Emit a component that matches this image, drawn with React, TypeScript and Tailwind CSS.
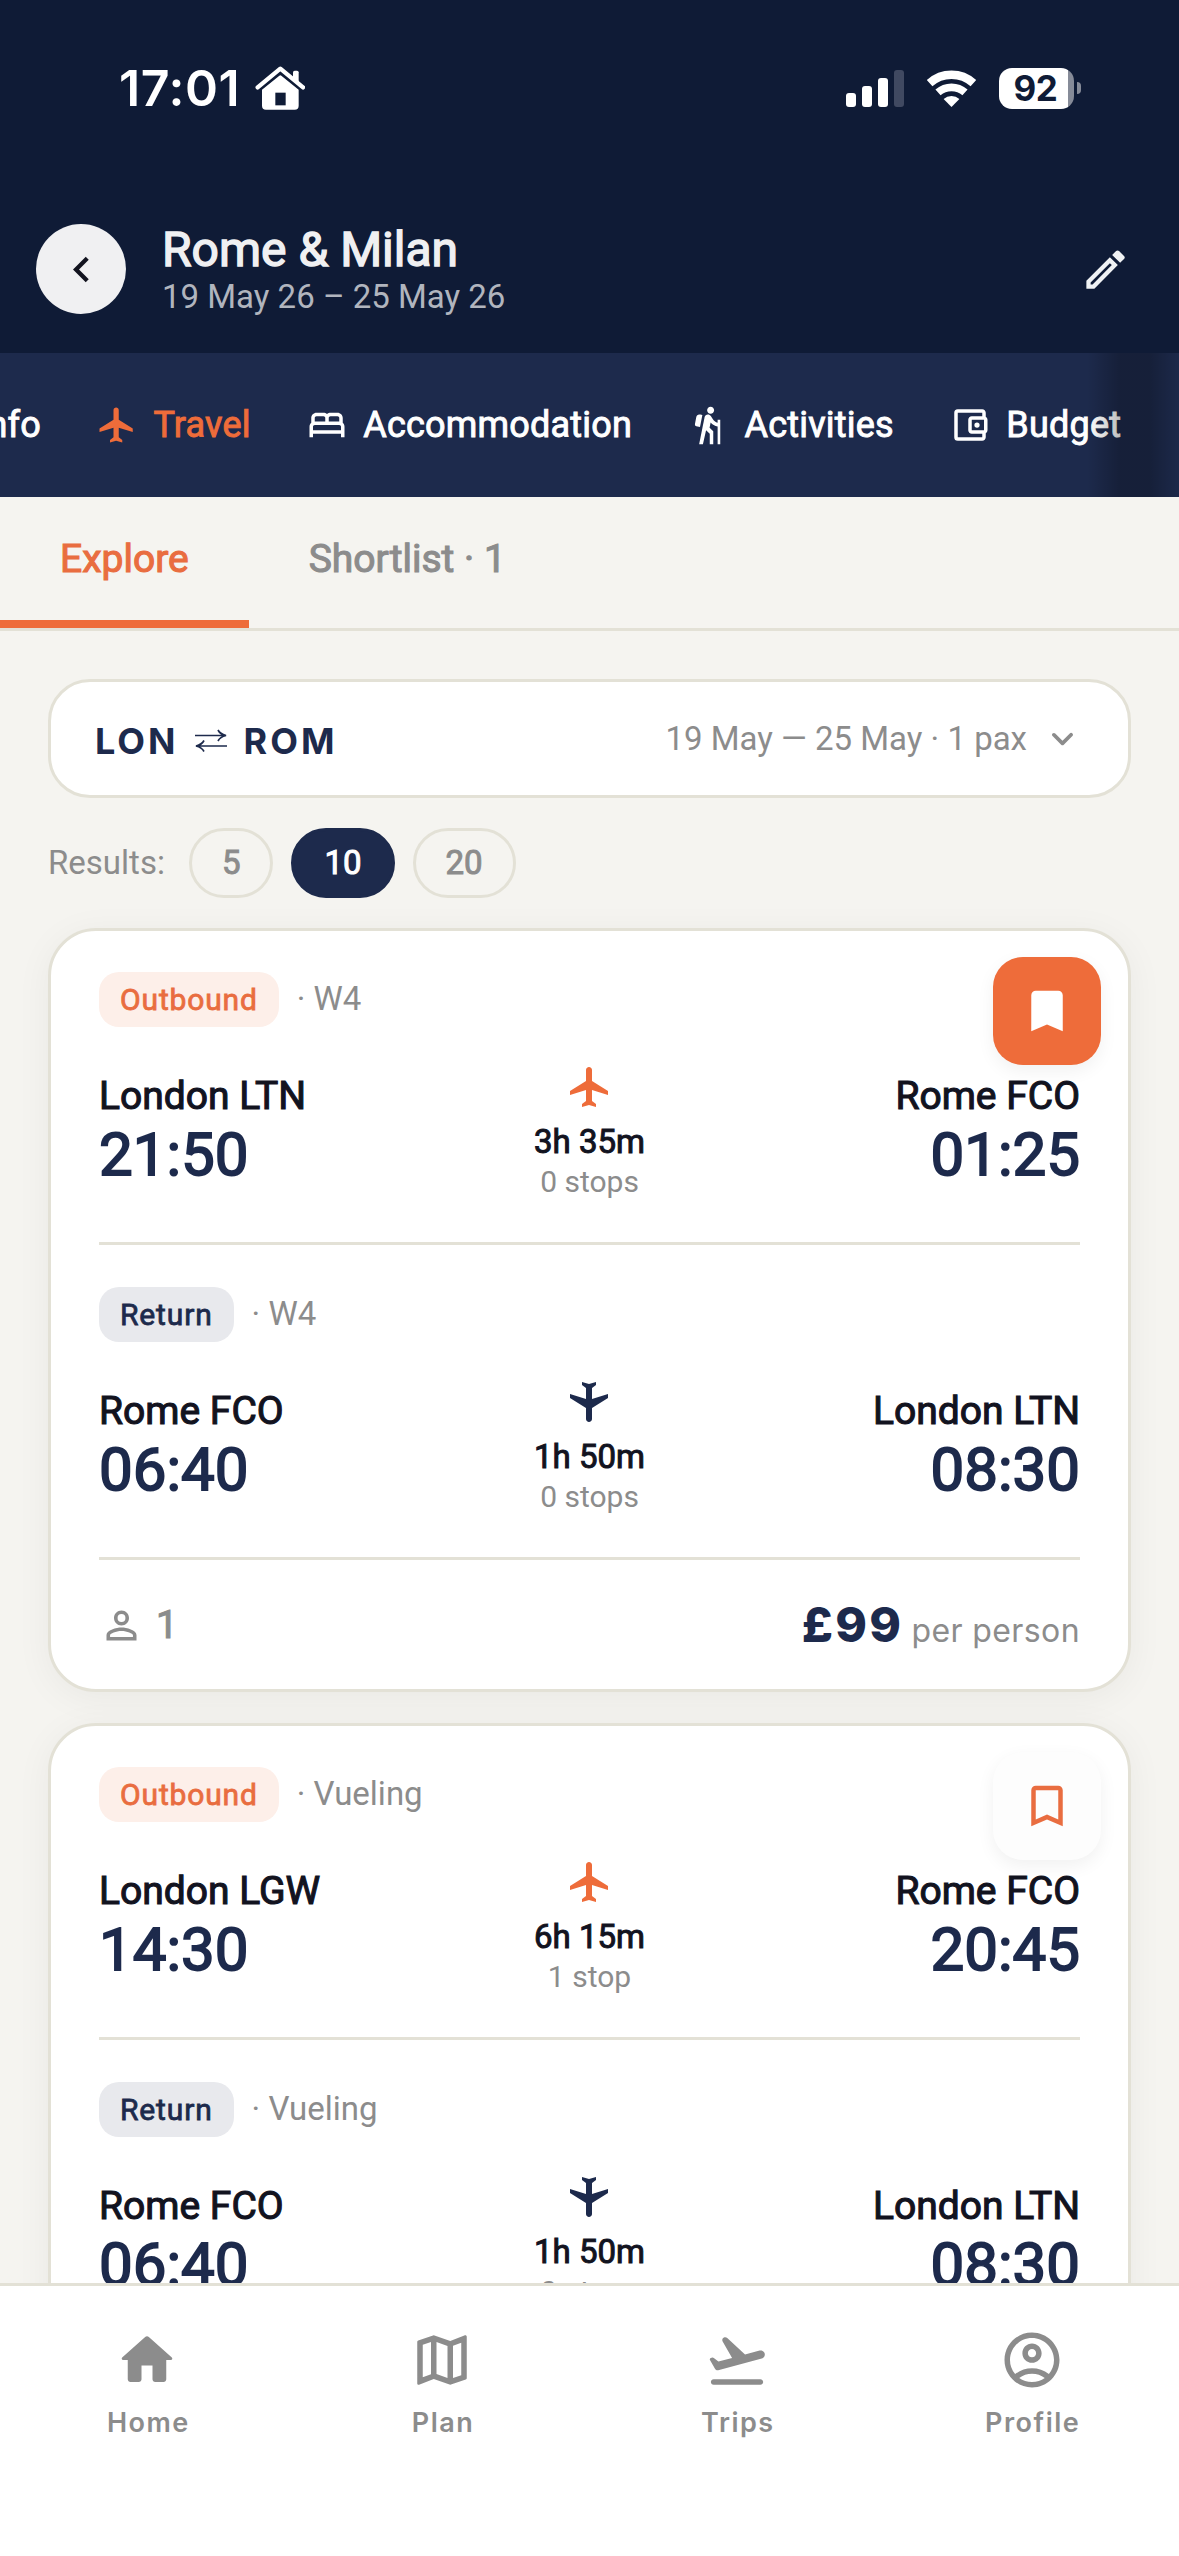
import React, { useState } from 'react';
import clsx from 'clsx';
import {
   MdBookmark,
   MdBookmarkBorder,
   MdChevronLeft,
   MdFlight,
   MdHiking,
   MdOutlineAccountBalanceWallet,
   MdOutlineAccountCircle,
   MdOutlineBed,
   MdOutlineEdit,
   MdOutlineMap,
   MdPersonOutline
} from 'react-icons/md';

interface Leg {
   type: 'Outbound' | 'Return';
   carrier: string;
   from: string;
   departs: string;
   to: string;
   arrives: string;
   duration: string;
   stops: string;
}

interface Flight {
   id: string;
   saved: boolean;
   pax: number;
   price: string;
   legs: Leg[];
}

const flights: Flight[] = [
   {
      id: 'w4-99',
      saved: true,
      pax: 1,
      price: '£99',
      legs: [
         { type: 'Outbound', carrier: 'W4', from: 'London LTN', departs: '21:50', to: 'Rome FCO', arrives: '01:25', duration: '3h 35m', stops: '0 stops' },
         { type: 'Return', carrier: 'W4', from: 'Rome FCO', departs: '06:40', to: 'London LTN', arrives: '08:30', duration: '1h 50m', stops: '0 stops' },
      ],
   },
   {
      id: 'vueling-104',
      saved: false,
      pax: 1,
      price: '£104',
      legs: [
         { type: 'Outbound', carrier: 'Vueling', from: 'London LGW', departs: '14:30', to: 'Rome FCO', arrives: '20:45', duration: '6h 15m', stops: '1 stop' },
         { type: 'Return', carrier: 'Vueling', from: 'Rome FCO', departs: '06:40', to: 'London LTN', arrives: '08:30', duration: '1h 50m', stops: '0 stops' },
      ],
   },
];

const sections = [
   { label: 'Travel', icon: MdFlight },
   { label: 'Accommodation', icon: MdOutlineBed },
   { label: 'Activities', icon: MdHiking },
   { label: 'Budget', icon: MdOutlineAccountBalanceWallet },
];

const HomeRounded = ({ className }: { className?: string }) => (
   <svg viewBox="0 0 24 24" fill="currentColor" className={className}>
      <path d="M10 19v-5h4v5c0 .55.45 1 1 1h3c.55 0 1-.45 1-1v-7h1.7c.46 0 .68-.57.33-.87L12.67 3.6c-.38-.34-.96-.34-1.34 0l-8.36 7.53c-.34.3-.13.87.33.87H5v7c0 .55.45 1 1 1h3c.55 0 1-.45 1-1z" />
   </svg>
);

const TakeoffRounded = ({ className }: { className?: string }) => (
   <svg viewBox="0 0 24 24" fill="currentColor" className={className}>
      <path d="M20.5 21h-17c-.55 0-1-.45-1-1s.45-1 1-1h17c.55 0 1 .45 1 1s-.45 1-1 1zm1.57-11.36c-.22-.8-1.04-1.27-1.84-1.06L14.92 10 8.46 3.98c-.27-.26-.66-.35-1.02-.26-.68.18-1.01.95-.66 1.55l3.44 5.98-4.97 1.33-1.57-1.24c-.25-.19-.57-.26-.88-.18l-.33.09c-.32.08-.47.45-.3.73l1.88 3.25c.23.39.69.58 1.12.47L21 11.48c.8-.22 1.28-1.04 1.07-1.84z" />
   </svg>
);

const navItems = [
   { label: 'Home', icon: HomeRounded },
   { label: 'Plan', icon: MdOutlineMap },
   { label: 'Trips', icon: TakeoffRounded },
   { label: 'Profile', icon: MdOutlineAccountCircle },
];

const StatusBar = () => (
   <div className="flex h-[176px] items-center justify-between pr-[98px] pl-[119px] font-['Inter',sans-serif] text-white">
      <div className="flex items-center gap-[15px]">
         <span className="text-[50px] leading-[60px] font-semibold tracking-[0.6px]">17:01</span>
         <svg width="50" height="44" viewBox="76 46 150 132">
            <path d="M195 60h7q5 0 5 5v36l-17-14v-22q0-5 5-5z" fill="white" />
            <path d="M84 110L152 54L220 110" fill="none" stroke="white" strokeWidth="13" strokeLinecap="round" strokeLinejoin="round" />
            <path d="M149 75q3-3 6 0L207 117v48q0 12-12 12h-86q-12 0-12-12v-48z" fill="white" />
            <rect x="137" y="126" width="31" height="38" fill="#0f1b36" />
         </svg>
      </div>
      <div className="flex items-center">
         <svg width="58" height="37" viewBox="0 0 58 37" fill="white">
            <rect x="0" y="23" width="10" height="14" rx="3" />
            <rect x="16" y="16" width="10" height="21" rx="3" />
            <rect x="32" y="8" width="10" height="29" rx="3" />
            <rect x="48" y="0" width="10" height="37" rx="3" fill="#404961" />
         </svg>
         <svg width="51" height="37" viewBox="0 0 51 37" className="ml-[22px]" fill="none" stroke="white">
            <path d="M3.6 13.2A32.7 32.7 0 0 1 47.4 13.2" strokeWidth="8.4" />
            <path d="M12 22.4A20.5 20.5 0 0 1 39 22.4" strokeWidth="7.8" />
            <path d="M25.5 37L17.6 29A12 12 0 0 1 33.4 29z" fill="white" stroke="none" />
         </svg>
         <div className="ml-[22px] flex h-[41px] w-[75px] items-center rounded-[13px] bg-[linear-gradient(90deg,#ffffff_69px,#868b98_69px)]">
            <span className="w-[73px] text-center text-[35px] leading-[41px] font-bold tracking-[-0.3px] text-[#0f1b36]">92</span>
         </div>
         <div className="ml-[3px] h-[12px] w-[4px] rounded-r-full bg-[#868b98]" />
      </div>
   </div>
);

const LegRow = ({ leg }: { leg: Leg }) => {
   const outbound = leg.type === 'Outbound';
   return (
      <div>
         <div className="flex h-[55px] items-center gap-[18px]">
            <span
               className={clsx(
                  'flex h-full items-center rounded-[20px] px-[21px] pb-[1px] text-[30px] tracking-[0.85px] [-webkit-text-stroke:0.8px]',
                  outbound ? 'bg-[#fdefe9] text-[#e96d40]' : 'bg-[#e8e9ed] text-[#1d2a4c]'
               )}
            >
               {leg.type}
            </span>
            <span className="pb-[2px] text-[33px] text-[#8c8c8c]">· {leg.carrier}</span>
         </div>
         <div className="mt-[36px] grid h-[137px] grid-cols-3 items-start">
            <div className="pt-[8px]">
               <p className="text-[39px] leading-[51px] text-[#12131f] [-webkit-text-stroke:1.1px]">{leg.from}</p>
               <p className="text-[60px] leading-[65px] text-[#1d2a4c] [-webkit-text-stroke:1.8px]">{leg.departs}</p>
            </div>
            <div className="flex flex-col items-center">
               <MdFlight className={clsx('size-[48px]', outbound ? 'text-[#ee6c3a]' : '-scale-y-100 text-[#1d2a4c]')} />
               <p className="mt-[11px] text-[33px] leading-[40px] text-[#12131f] [-webkit-text-stroke:1px]">{leg.duration}</p>
               <p className="text-[30px] leading-[40px] text-[#8c8c8c]">{leg.stops}</p>
            </div>
            <div className="pt-[8px] text-right">
               <p className="text-[39px] leading-[51px] text-[#12131f] [-webkit-text-stroke:1.1px]">{leg.to}</p>
               <p className="text-[60px] leading-[65px] text-[#1d2a4c] [-webkit-text-stroke:1.8px]">{leg.arrives}</p>
            </div>
         </div>
      </div>
   );
};

const FlightCard = ({ flight, saved, onToggle }: { flight: Flight; saved: boolean; onToggle: () => void }) => (
   <article className="relative shrink-0 rounded-[48px] border-[3px] border-[#e3e1d6] bg-white px-12 pt-[41px] shadow-[0_6px_36px_rgba(0,0,0,0.05)]">
      <button
         onClick={onToggle}
         className={clsx(
            'absolute top-[26px] right-[27px] flex size-[108px] items-center justify-center rounded-[30px] shadow-[0_6px_18px_rgba(0,0,0,0.06)]',
            saved ? 'bg-[#ee6c3a] text-white' : 'bg-[#fdfdfd] text-[#e96d40]'
         )}
      >
         {saved ? <MdBookmark className="size-[54px]" /> : <MdBookmarkBorder className="size-[54px]" />}
      </button>
      {flight.legs.map((leg, i) => (
         <div key={leg.type} className={clsx('border-b-[3px] border-[#e3e1d6] pb-[42px]', i > 0 && 'pt-[42px]')}>
            <LegRow leg={leg} />
         </div>
      ))}
      <div className="flex h-[129px] items-center justify-between pt-[2px]">
         <div className="flex items-center gap-[12px] text-[#8c8c8c]">
            <MdPersonOutline className="size-[45px]" />
            <span className="text-[39px] [-webkit-text-stroke:1.1px]">{flight.pax}</span>
         </div>
         <div className="flex items-baseline gap-[8px] font-['Inter',sans-serif]">
            <span className="text-[48px] leading-[58px] font-extrabold tracking-[2.3px] text-[#1d2a4c]">{flight.price}</span>
            <span className="text-[32px] tracking-[0.4px] text-[#8c8c8c]">per person</span>
         </div>
      </div>
   </article>
);

export default function App() {
   const [activeSection, setActiveSection] = useState('Travel');
   const [activeTab, setActiveTab] = useState('Explore');
   const [limit, setLimit] = useState(10);
   const [saved, setSaved] = useState<string[]>(flights.filter((f) => f.saved).map((f) => f.id));

   const toggleSaved = (id: string) =>
      setSaved((prev) => (prev.includes(id) ? prev.filter((s) => s !== id) : [...prev, id]));

   return (
      <div className="flex h-[2556px] w-[1179px] flex-col overflow-hidden bg-[#f5f4f0] font-['Roboto',sans-serif]">
         <header className="h-[353px] shrink-0 bg-[#0f1b36]">
            <StatusBar />
            <div className="mt-12 flex h-[90px] items-center pr-12 pl-9">
               <button className="flex size-[90px] items-center justify-center rounded-full bg-[#f0f0f2]">
                  <MdChevronLeft className="size-[51px] text-[#12131f]" />
               </button>
               <div className="ml-9 flex-1">
                  <h1 className="pb-[2px] text-[48px] leading-[53px] text-[#f0f0f2] [-webkit-text-stroke:1.4px]">Rome &amp; Milan</h1>
                  <p className="text-[33px] leading-[37px] text-[#b1b5be]">19 May 26 – 25 May 26</p>
               </div>
               <MdOutlineEdit className="size-[51px] text-[#f0f2f4]" />
            </div>
         </header>

         <nav className="relative flex h-[144px] shrink-0 items-center gap-[55px] overflow-hidden bg-[#1d2a4c] text-[36px] tracking-[0.2px] text-white [-webkit-text-stroke:0.9px]">
            <button className="flex w-[41px] shrink-0 justify-end">Info</button>
            {sections.map(({ label, icon: Icon }) => (
               <button
                  key={label}
                  onClick={() => setActiveSection(label)}
                  className={clsx('flex shrink-0 items-center gap-[15.5px]', activeSection === label && 'text-[#ee6c3a]')}
               >
                  <Icon className="size-[42px]" />
                  <span>{label}</span>
               </button>
            ))}
            <div className="absolute inset-y-0 right-0 w-[92px] bg-[linear-gradient(90deg,transparent,rgba(0,0,0,0.25)_36%,rgba(0,0,0,0.25)_68%,rgba(0,0,0,0.03))]" />
         </nav>

         <div className="flex h-[134px] shrink-0 border-b-[3px] border-[#e3e1d6] text-[39px] [-webkit-text-stroke:1.1px]">
            {['Explore', 'Shortlist'].map((tab) => (
               <button
                  key={tab}
                  onClick={() => setActiveTab(tab)}
                  className={clsx(
                     'h-[131px] border-b-[8px] px-[60px] pt-[2px]',
                     activeTab === tab ? 'border-[#ee6c3a] text-[#e96d40]' : 'border-transparent text-[#8c8c8c]'
                  )}
               >
                  {tab === 'Shortlist' ? `Shortlist · ${saved.length}` : tab}
               </button>
            ))}
         </div>

         <main className="flex min-h-0 flex-1 flex-col overflow-hidden px-12 pt-12">
            <div className="flex h-[119px] shrink-0 items-center justify-between rounded-[42px] border-[3px] border-[#e3e1d6] bg-white px-[43px]">
               <div className="flex items-center pt-[5px] pl-[1px] font-['Inter',sans-serif] text-[36px] leading-[44px] font-bold tracking-[3px] text-[#1d2a4c]">
                  <span>LON</span>
                  <svg width="32" height="24" viewBox="0 0 32 24" className="mr-[17px] ml-[16px]" fill="none" stroke="currentColor" strokeWidth="1.7">
                     <path d="M0 6.5H30M23 1Q25 5 31 6.5Q25 8 23 12" />
                     <path d="M32 17H2M9 11.5Q7 15.5 1 17Q7 18.5 9 22.5" />
                  </svg>
                  <span>ROM</span>
               </div>
               <div className="flex items-center gap-[13px] text-[33px] text-[#8c8c8c]">
                  <span>19 May — 25 May · 1 pax</span>
                  <svg viewBox="0 0 24 24" fill="currentColor" className="size-[45px]">
                     <path d="M8.12 9.29L12 13.17l3.88-3.88c.39-.39 1.02-.39 1.41 0 .39.39.39 1.02 0 1.41l-4.59 4.59c-.39.39-1.02.39-1.41 0L6.7 10.7c-.39-.39-.39-1.02 0-1.41.39-.38 1.03-.39 1.42 0z" />
                  </svg>
               </div>
            </div>

            <div className="mt-[30px] flex h-[70px] shrink-0 items-center text-[33px]">
               <span className="text-[#8c8c8c]">Results:</span>
               <div className="ml-6 flex gap-[18px]">
                  {[5, 10, 20].map((n) => (
                     <button
                        key={n}
                        onClick={() => setLimit(n)}
                        className={clsx(
                           'h-[70px] rounded-full border-[3px] px-[30px] [-webkit-text-stroke:1px]',
                           limit === n ? 'border-[#1d2a4c] bg-[#1d2a4c] text-white' : 'border-[#e3e1d6] text-[#8c8c8c]'
                        )}
                     >
                        {n}
                     </button>
                  ))}
               </div>
            </div>

            <div className="mt-[30px] flex flex-col gap-[31px]">
               {flights.map((flight) => (
                  <FlightCard
                     key={flight.id}
                     flight={flight}
                     saved={saved.includes(flight.id)}
                     onToggle={() => toggleSaved(flight.id)}
                  />
               ))}
            </div>
         </main>

         <footer className="relative grid h-[273px] shrink-0 grid-cols-4 items-start border-t-[3px] border-[#e3e1d6] bg-white pt-[41px]">
            {navItems.map(({ label, icon: Icon }) => (
               <button key={label} className="flex flex-col items-center gap-[12px] text-[#8c8c8c]">
                  <Icon className="size-[66px]" />
                  <span className="pl-[2px] font-['Inter',sans-serif] text-[27px] leading-[36px] font-semibold tracking-[1.5px]">{label}</span>
               </button>
            ))}
         </footer>
      </div>
   );
}
